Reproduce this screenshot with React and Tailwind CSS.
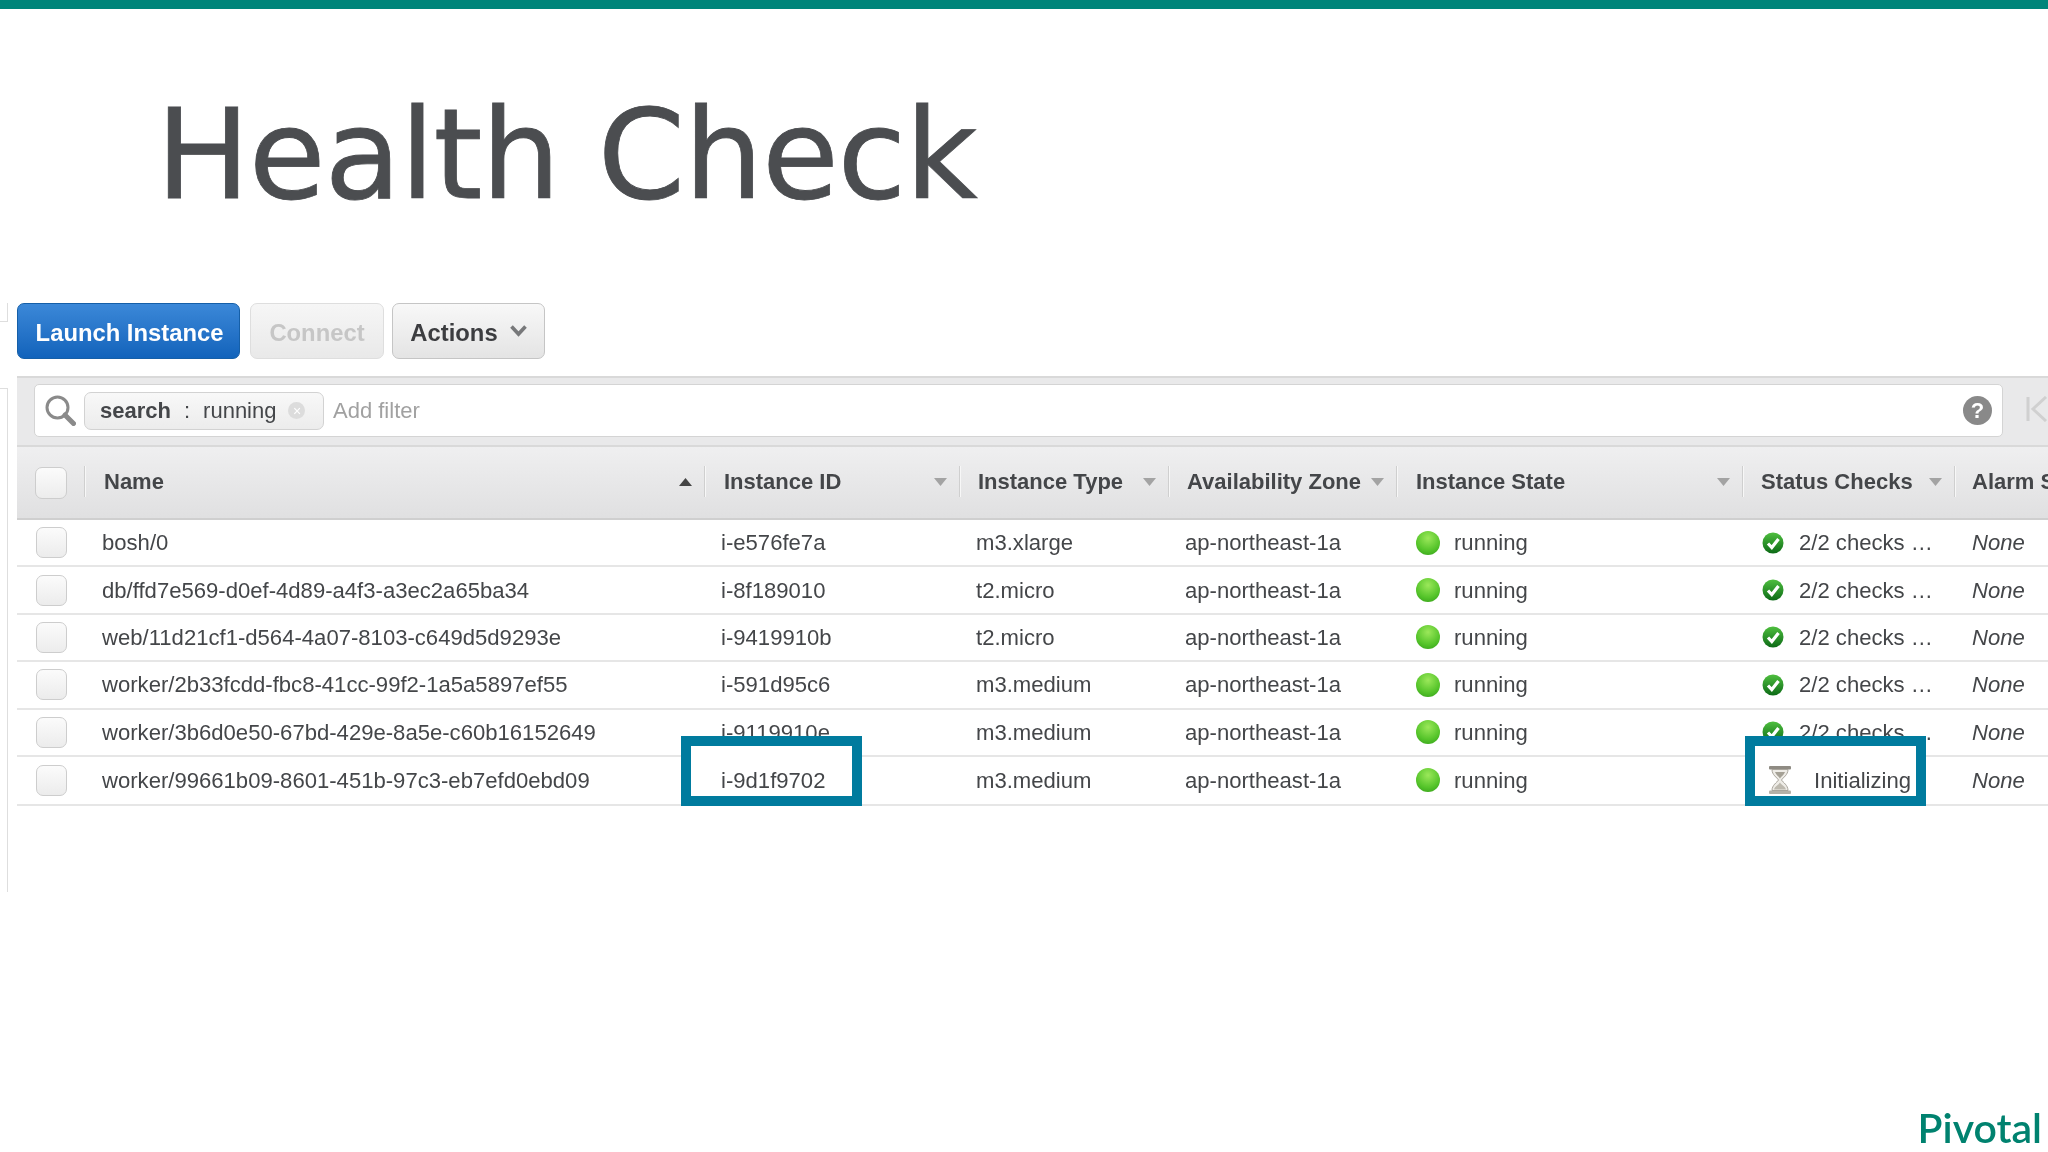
import React from "react";

const rows = [
  ["bosh/0", "i-e576fe7a", "m3.xlarge"],
  ["db/ffd7e569-d0ef-4d89-a4f3-a3ec2a65ba34", "i-8f189010", "t2.micro"],
  ["web/11d21cf1-d564-4a07-8103-c649d5d9293e", "i-9419910b", "t2.micro"],
  ["worker/2b33fcdd-fbc8-41cc-99f2-1a5a5897ef55", "i-591d95c6", "m3.medium"],
  ["worker/3b6d0e50-67bd-429e-8a5e-c60b16152649", "i-9119910e", "m3.medium"],
  ["worker/99661b09-8601-451b-97c3-eb7efd0ebd09", "i-9d1f9702", "m3.medium", true],
];

const cols = "grid grid-cols-[67px_620px_255px_209px_228px_346px_212px_94px]";

function Tri({ up, dark }) {
  return (
    <svg width="13" height="8" viewBox="0 0 13 8" className="shrink-0">
      <path d={up ? "M6.5 0 L13 8 L0 8 Z" : "M0 0 L13 0 L6.5 8 Z"} fill={dark ? "#444" : "#a3a3a3"} />
    </svg>
  );
}

function HeadCell({ label, up, sep = true, pad = "pl-[20px]" }) {
  return (
    <div className={"relative flex h-full items-center justify-between pb-[2px] " + pad}>
      <div className="absolute left-0 top-[19px] h-[31px] w-[2px] border-l border-[#cfcfcf] bg-[#f7f7f7]" />
      <span className="whitespace-nowrap">{label}</span>
      {sep && <span className="pr-[12px]"><Tri up={up} dark={up} /></span>}
    </div>
  );
}

function Box({ className }) {
  return (
    <div className={"rounded-[7px] border border-[#cdcdcd] bg-gradient-to-b from-[#fbfbfb] to-[#ececec] " + className} />
  );
}

function Check() {
  return (
    <svg width="22" height="24" viewBox="0 0 22 24" className="shrink-0">
      <defs>
        <linearGradient id="chk" x1="0" y1="0" x2="0" y2="1">
          <stop offset="0" stopColor="#4fbf3f" />
          <stop offset="1" stopColor="#0c6a16" />
        </linearGradient>
      </defs>
      <circle cx="11" cy="12" r="10.5" fill="url(#chk)" />
      <path d="M6 12.5 L9.8 16.5 L16.5 8" fill="none" stroke="#fff" strokeWidth="3.2" />
    </svg>
  );
}

function Hourglass() {
  return (
    <svg width="24" height="29" viewBox="0 0 24 29" className="shrink-0">
      <rect x="1" y="0" width="22" height="3.5" rx="1" fill="#8f8b83" />
      <rect x="1" y="24.5" width="22" height="3.5" rx="1" fill="#b5b1a8" />
      <path d="M4 3.5 H20 C20 9 15 11.5 13.5 14 C15 16.5 20 19 20 24.5 H4 C4 19 9 16.5 10.5 14 C9 11.5 4 9 4 3.5 Z" fill="#eeece7" stroke="#a8a49b" strokeWidth="1" />
      <path d="M6 23.5 C7 20 10.5 19 12 16.5 C13.5 19 17 20 18 23.5 Z" fill="#bdb9af" />
      <path d="M7 6 H17 C16 9 13 10.5 12 12.5 C11 10.5 8 9 7 6 Z" fill="#a5a196" />
    </svg>
  );
}

function Highlight({ className, children, contentClass }) {
  return (
    <div className={"absolute -bottom-[2px] z-10 h-[70px] w-[181px] border-[10px] border-[#007b9e] bg-white " + className}>
      <div className={"flex h-full items-center pt-[20px] " + contentClass}>{children}</div>
    </div>
  );
}

export default function App() {
  return (
    <div className="flex h-[1152px] w-[2048px] flex-col overflow-hidden bg-white font-['Liberation_Sans',Arial,sans-serif] text-[#444649] blur-[0.5px]">
      <div className="h-[9px] shrink-0 bg-[#00857a]" />

      <div className="flex h-[294px] shrink-0 items-start pl-[156px] pt-[77px]">
        <h1 className="whitespace-nowrap font-['DejaVu_Sans',sans-serif] text-[125px] font-normal leading-[1.1] tracking-[-1.2px] text-[#4b4d50] [-webkit-text-stroke:0.8px_#4b4d50]">
          Health Check
        </h1>
      </div>

      <div className="relative flex h-[56px] shrink-0 items-stretch pl-[17px] text-[23.8px] font-bold">
        <div className="absolute left-0 top-0 h-[19px] w-[8px] border-b border-r border-[#dedede]" />
        <div className="flex w-[223px] items-center justify-center rounded-[7px] border border-[#155fa8] bg-gradient-to-b from-[#3b88d8] to-[#1163bb] pl-[2px] pt-[3px] text-white">
          Launch Instance
        </div>
        <div className="ml-[10px] flex w-[134px] items-center justify-center rounded-[7px] border border-[#dedede] bg-gradient-to-b from-[#f6f6f6] to-[#e9e9e9] pt-[3px] text-[#c6c6c6]">
          Connect
        </div>
        <div className="ml-[8px] flex w-[153px] items-center justify-center gap-[12px] rounded-[7px] border border-[#c5c5c5] bg-gradient-to-b from-[#f8f8f8] to-[#e4e4e4] pt-[3px] text-[#3c3d40]">
          Actions
          <svg width="17" height="12" viewBox="0 0 17 12" className="-mt-[3px]">
            <path d="M1.5 1.5 L8.5 9 L15.5 1.5" fill="none" stroke="#77787a" strokeWidth="3.6" />
          </svg>
        </div>
      </div>

      <div className="mt-[17px] flex min-h-0 flex-1 items-start">
        <div className="mt-[12px] h-[504px] w-[8px] shrink-0 border-r border-t border-[#dedede]" />
        <div className="ml-[9px] w-[2031px] shrink-0">
          <div className="flex h-[71px] items-start border-y-[2px] border-[#d9d9d9] bg-[#e9e9ea] pl-[17px] pt-[6px]">
            <div className="flex h-[53px] w-[1969px] shrink-0 items-center rounded-[5px] border border-[#d4d4d4] bg-white pl-[10px] pr-[10px] text-[22px]">
              <svg width="31" height="31" viewBox="0 0 31 31" className="shrink-0">
                <circle cx="12.5" cy="12.5" r="10.5" fill="#fff" stroke="#8a8a8a" strokeWidth="3" />
                <path d="M20 20 L28.5 28.5" stroke="#8a8a8a" strokeWidth="5" strokeLinecap="round" />
              </svg>
              <div className="ml-[8px] flex h-[38px] w-[240px] shrink-0 items-center rounded-[7px] border border-[#d2d2d2] bg-gradient-to-b from-[#f8f8f8] to-[#ececec] pl-[15px]">
                <span className="font-bold">search</span>
                <span className="ml-[13px]">:</span>
                <span className="ml-[13px]">running</span>
                <span className="ml-[12px] flex h-[17px] w-[17px] items-center justify-center rounded-full bg-[#dcdcdc] text-[14px] leading-none text-white">×</span>
              </div>
              <span className="ml-[9px] text-[#a1a1a1]">Add filter</span>
              <span className="ml-auto flex h-[29px] w-[29px] items-center justify-center rounded-full bg-[#898989] text-[22px] font-bold leading-none text-white">?</span>
            </div>
            <svg width="24" height="26" viewBox="0 0 24 26" className="ml-[23px] mt-[12px] shrink-0">
              <path d="M2 1 V25 M20 1 L7 13 L20 25" fill="none" stroke="#d0d0d0" strokeWidth="3" />
            </svg>
          </div>

          <div className={cols + " h-[73px] items-center border-b-[2px] border-[#cfcfcf] bg-gradient-to-b from-[#efeff0] to-[#e0e0e1] text-[22px] font-bold"}>
            <div className="flex h-full items-center pl-[18px]"><Box className="h-[32px] w-[32px]" /></div>
            <HeadCell label="Name" up />
            <HeadCell label="Instance ID" />
            <HeadCell label="Instance Type" pad="pl-[19px]" />
            <HeadCell label="Availability Zone" pad="pl-[19px]" />
            <HeadCell label="Instance State" />
            <HeadCell label="Status Checks" pad="pl-[19px]" />
            <HeadCell label="Alarm Status" sep={false} pad="pl-[18px]" />
          </div>

          {rows.map(([name, id, type, init]) => (
            <div key={name} className={cols + " items-center border-b-[2px] border-[#e6e6e6] text-[22.1px] " + (init ? "h-[49px]" : "h-[47.4px]")}>
              <div className="pl-[19px]"><Box className="h-[31px] w-[31px]" /></div>
              <div className="whitespace-nowrap pl-[18px]">{name}</div>
              <div className="relative h-full self-stretch">
                {init ? (
                  <Highlight className="-left-[23px]" contentClass="pl-[30px]">{id}</Highlight>
                ) : (
                  <div className="flex h-full items-center pl-[17px]">{id}</div>
                )}
              </div>
              <div className="pl-[17px]">{type}</div>
              <div className="pl-[17px]">ap-northeast-1a</div>
              <div className="flex items-center gap-[14px] pl-[20px]">
                <span className="h-[24px] w-[24px] shrink-0 rounded-full bg-[radial-gradient(circle_at_50%_30%,#9be85a,#55c42a_60%,#2f9a18)]" />
                running
              </div>
              <div className="relative h-full self-stretch">
                {init ? (
                  <Highlight className="left-[3px]" contentClass="pl-[13px]">
                    <Hourglass />
                    <span className="ml-[22px]">Initializing</span>
                  </Highlight>
                ) : (
                  <div className="flex h-full items-center gap-[15px] pl-[20px]">
                    <Check />
                    <span className="whitespace-nowrap">2/2 checks …</span>
                  </div>
                )}
              </div>
              <div className="pl-[18px] italic">None</div>
            </div>
          ))}
        </div>
      </div>

      <div className="flex h-[52px] shrink-0 items-end justify-end pb-[4px] pr-[6px]">
        <span className="font-['Lato',sans-serif] text-[41px] font-semibold leading-none text-[#00826f]">Pivotal</span>
      </div>
    </div>
  );
}
